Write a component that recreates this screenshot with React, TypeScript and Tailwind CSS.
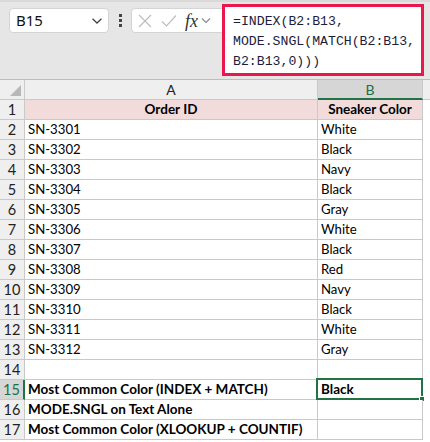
import React from "react";

const rows: [string, string][] = [
  ["SN-3301", "White"],
  ["SN-3302", "Black"],
  ["SN-3303", "Navy"],
  ["SN-3304", "Black"],
  ["SN-3305", "Gray"],
  ["SN-3306", "White"],
  ["SN-3307", "Black"],
  ["SN-3308", "Red"],
  ["SN-3309", "Navy"],
  ["SN-3310", "Black"],
  ["SN-3311", "White"],
  ["SN-3312", "Gray"],
];

const summary: [string, string][] = [
  ["Most Common Color (INDEX + MATCH)", "Black"],
  ["MODE.SNGL on Text Alone", ""],
  ["Most Common Color (XLOOKUP + COUNTIF)", ""],
];

function RowHead({ n, active }: { n: number; active?: boolean }) {
  return (
    <div
      className={
        "w-[25px] shrink-0 h-full flex items-center justify-center border-b border-[#c9c9c9] text-[14.5px] " +
        (active
          ? "bg-[#d6d6d6] text-[#1e6e42] border-r-2 border-r-[#217346]"
          : "bg-[#efefef] text-[#222] border-r border-r-[#c9c9c9]")
      }
    >
      {n}
    </div>
  );
}

function Row({
  n,
  a,
  b,
  bold,
  pink,
  centered,
  selected,
}: {
  n: number;
  a: string;
  b: string;
  bold?: boolean;
  pink?: boolean;
  centered?: boolean;
  selected?: boolean;
}) {
  const cell =
    "h-full border-r border-b border-[#c9c9c9] px-[3px] leading-[19px] whitespace-nowrap overflow-visible " +
    (bold ? "font-bold text-[13.5px] " : "text-[13.2px] ") +
    (pink ? "bg-[#f2dcdb] " : "bg-white ") +
    (centered ? "text-center " : "");
  return (
    <div className="flex h-[20px]">
      <RowHead n={n} active={selected} />
      <div className={cell + "w-[293px] shrink-0"}>{a}</div>
      <div className={cell + "w-[105px] shrink-0 relative"}>
        {b}
        {selected && (
          <div className="absolute left-[-2px] top-[-2px] right-[-1px] bottom-[-1px] border-2 border-[#217346]">
            <div className="absolute right-[-4px] bottom-[-4px] w-[6px] h-[6px] bg-[#217346] border border-white" />
          </div>
        )}
      </div>
      <div className="flex-1 h-full bg-white" />
    </div>
  );
}

export default function App() {
  return (
    <div className="w-[430px] h-[442px] overflow-hidden bg-white text-black font-['Lato','Liberation_Sans',sans-serif]">
      {/* formula bar */}
      <div className="h-[79px] bg-[#e6e6e6] border-t-2 border-[#d9d9d9] flex items-start">
        <div className="ml-[9px] mt-[6px] w-[100px] h-[25px] bg-white rounded-[4px] border border-[#d4d4d4] flex items-center justify-between pl-[6px] pr-[5px]">
          <span className="text-[15px] text-[#111] font-['Noto_Sans',sans-serif] leading-none">B15</span>
          <svg width="12" height="8" viewBox="0 0 12 8" fill="none" stroke="#444" strokeWidth="1.3">
            <path d="M1.5 1.8 L6 6 L10.5 1.8" />
          </svg>
        </div>
        <div className="w-[22px] h-[25px] mt-[6px] flex flex-col items-center justify-center gap-[2px]">
          <div className="w-[3px] h-[3px] bg-[#444]" />
          <div className="w-[3px] h-[3px] bg-[#444]" />
          <div className="w-[3px] h-[3px] bg-[#444]" />
        </div>
        <div className="mt-[6px] h-[25px] w-[96px] shrink-0 bg-white rounded-l-[4px] border border-[#d4d4d4] flex items-center pl-[6px] gap-[9px]">
          <svg width="14" height="14" viewBox="0 0 14 14" stroke="#bdbdbd" strokeWidth="1.2">
            <path d="M1 1 L13 13 M13 1 L1 13" />
          </svg>
          <svg width="16" height="14" viewBox="0 0 16 14" fill="none" stroke="#bdbdbd" strokeWidth="1.2">
            <path d="M1 7.5 L5.5 12 L15 1.5" />
          </svg>
          <span className="text-[18px] italic text-[#333] font-['Liberation_Serif',serif] leading-none -ml-[1px]">
            fx
          </span>
          <svg width="10" height="7" viewBox="0 0 10 7" fill="none" stroke="#888" strokeWidth="1.1" className="-ml-[6px]">
            <path d="M1 1.5 L5 5.5 L9 1.5" />
          </svg>
        </div>
        <div className="ml-[-5px] mt-[2px] w-[202px] h-[72px] bg-white border-[3px] border-[#e8184d] pl-[8px] pt-[5px] font-['Liberation_Mono',monospace] text-[13.2px] leading-[20px] text-[#1c1c3c] relative">
          <div>=INDEX(B2:B13,</div>
          <div>MODE.SNGL(MATCH(B2:B13,</div>
          <div>B2:B13,0)))</div>
        </div>
      </div>

      {/* column headers */}
      <div className="flex h-[21px] border-t border-[#bdbdbd]">
        <div className="w-[25px] shrink-0 h-full bg-[#efefef] border-r border-b border-[#c9c9c9] relative">
          <div className="absolute right-[3px] bottom-[3px] w-0 h-0 border-l-[11px] border-l-transparent border-b-[11px] border-b-[#b8b8b8]" />
        </div>
        <div className="w-[293px] shrink-0 h-full bg-[#efefef] border-r border-b border-[#c9c9c9] text-center text-[14px] leading-[19px] text-[#222]">
          A
        </div>
        <div className="w-[105px] shrink-0 h-full bg-[#d6d6d6] border-r border-[#c9c9c9] border-b-2 border-b-[#217346] text-center text-[14px] leading-[19px] text-[#1e6e42]">
          B
        </div>
        <div className="flex-1 h-full bg-[#efefef] border-b border-[#c9c9c9]" />
      </div>

      <Row n={1} a="Order ID" b="Sneaker Color" bold pink centered />
      {rows.map(([a, b], i) => (
        <Row key={a} n={i + 2} a={a} b={b} />
      ))}
      <Row n={14} a="" b="" />
      {summary.map(([a, b], i) => (
        <Row key={a} n={15 + i} a={a} b={b} bold selected={i === 0} />
      ))}
    </div>
  );
}
